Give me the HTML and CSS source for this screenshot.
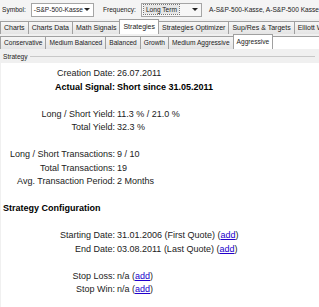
FILE: index.html
```html
<!DOCTYPE html>
<html>
<head>
<meta charset="utf-8">
<link rel="stylesheet" href="styles.css">
</head>
<body>
<div class="toolbar">
  <span class="lbl">Symbol:</span>
  <div class="select sym"><span class="val">-S&amp;P-500-Kasse</span><span class="arrow"></span></div>
  <span class="lbl freq">Frequency:</span>
  <div class="select frq"><span class="val focus">Long Term</span><span class="arrow"></span></div>
  <span class="desc">A-S&amp;P-500-Kasse, A-S&amp;P-500 Kasse</span>
</div>
<div class="tabs main">
  <div class="tab">Charts</div>
  <div class="tab">Charts Data</div>
  <div class="tab">Math Signals</div>
  <div class="tab active">Strategies</div>
  <div class="tab">Strategies Optimizer</div>
  <div class="tab">Sup/Res &amp; Targets</div>
  <div class="tab">Elliott Waves</div>
</div>
<div class="tabs sub">
  <div class="tab">Conservative</div>
  <div class="tab">Medium Balanced</div>
  <div class="tab">Balanced</div>
  <div class="tab">Growth</div>
  <div class="tab">Medium Aggressive</div>
  <div class="tab active">Aggressive</div>
  <div class="fill"></div>
</div>
<div class="legend"><span class="ltext">Strategy</span><span class="line"></span></div>
<div class="panel">
  <div class="grid">
    <div class="l">Creation Date:</div><div class="v">26.07.2011</div>
    <div class="l b">Actual Signal:</div><div class="v b">Short since 31.05.2011</div>
    <div class="blank"></div>
    <div class="l">Long / Short Yield:</div><div class="v">11.3 % / 21.0 %</div>
    <div class="l">Total Yield:</div><div class="v">32.3 %</div>
    <div class="blank"></div>
    <div class="l">Long / Short Transactions:</div><div class="v">9 / 10</div>
    <div class="l">Total Transactions:</div><div class="v">19</div>
    <div class="l">Avg. Transaction Period:</div><div class="v">2 Months</div>
    <div class="blank"></div>
  </div>
  <div class="heading">Strategy Configuration</div>
  <div class="grid">
    <div class="blank"></div>
    <div class="l">Starting Date:</div><div class="v">31.01.2006 (First Quote) (<a href="#">add</a>)</div>
    <div class="l">End Date:</div><div class="v">03.08.2011 (Last Quote) (<a href="#">add</a>)</div>
    <div class="blank"></div>
    <div class="l">Stop Loss:</div><div class="v">n/a (<a href="#">add</a>)</div>
    <div class="l">Stop Win:</div><div class="v">n/a (<a href="#">add</a>)</div>
  </div>
</div>
</body>
</html>
```
FILE: styles.css
```css
html, body {
  margin: 0;
  padding: 0;
  background: #f0f0f0;
  overflow: hidden;
}
body {
  font-family: "Liberation Sans", Arial, sans-serif;
  color: #222;
  width: 319px;
  height: 307px;
}
.toolbar {
  height: 19px;
  display: flex;
  align-items: center;
  white-space: nowrap;
  font-size: 6.6px;
  padding-left: 2px;
  background: #f4f4f4;
  overflow: hidden;
}
.select {
  display: flex;
  align-items: center;
  height: 14px;
  border: 1px solid #a5a5a5;
  background: #fff;
  box-sizing: border-box;
  margin-left: 5px;
  padding: 0 3px 0 2px;
  justify-content: space-between;
}
.sym { width: 67px; }
.frq { width: 70px; background: #f7f7f7; }
.frq .val { background: #e6e6e6; padding: 0 2px; line-height: 9px; }
.focus { outline: 1px dotted #777; }
.arrow {
  flex: none;
  margin-left: 1px;
  width: 0; height: 0;
  border-left: 3px solid transparent;
  border-right: 3px solid transparent;
  border-top: 3px solid #222;
}
.freq { margin-left: 9px; }
.desc { margin-left: 7px; }

.tabs {
  display: flex;
  white-space: nowrap;
  overflow: hidden;
  font-size: 6.6px;
  align-items: flex-end;
}
.tabs.main { height: 15px; background: #f0f0f0; font-size: 7px; }
.tabs.sub { height: 15px; background: #f0f0f0; }
.tab {
  flex: none;
  height: 13px;
  line-height: 12px;
  padding: 0 3px;
  box-sizing: border-box;
  border: 1px solid #a0a0a0;
  border-bottom: none;
  margin-right: -1px;
  background: linear-gradient(#f6f6f6, #e4e4e4);
  color: #222;
}
.tab.active {
  height: 15px;
  line-height: 14px;
  background: #fff;
  position: relative;
  z-index: 1;
}
.fill {
  flex: 1;
  height: 13px;
  background: #fff;
  border-top: 1px solid #a0a0a0;
  box-sizing: border-box;
}
.legend {
  height: 14px;
  display: flex;
  align-items: center;
  font-size: 6.6px;
  padding-left: 3px;
  background: #f0f0f0;
}
.legend .line {
  flex: 1;
  height: 0;
  border-top: 1px solid #c8c8c8;
  margin-left: 2px;
  margin-right: 4px;
}
.panel {
  background: #fff;
  margin-left: 1px;
  height: 244px;
  font-size: 9px;
  line-height: 13.5px;
  padding-top: 4px;
  box-sizing: border-box;
}
.grid {
  display: grid;
  grid-template-columns: 114px auto;
  column-gap: 2px;
  justify-content: start;
}
.l { text-align: right; white-space: nowrap; }
.v { white-space: nowrap; }
.b { font-weight: bold; color: #000; }
.blank { grid-column: 1 / 3; height: 13.5px; }
.heading { font-weight: bold; color: #000; padding-left: 2px; }
a { color: #2200cc; text-decoration: underline; }
```
